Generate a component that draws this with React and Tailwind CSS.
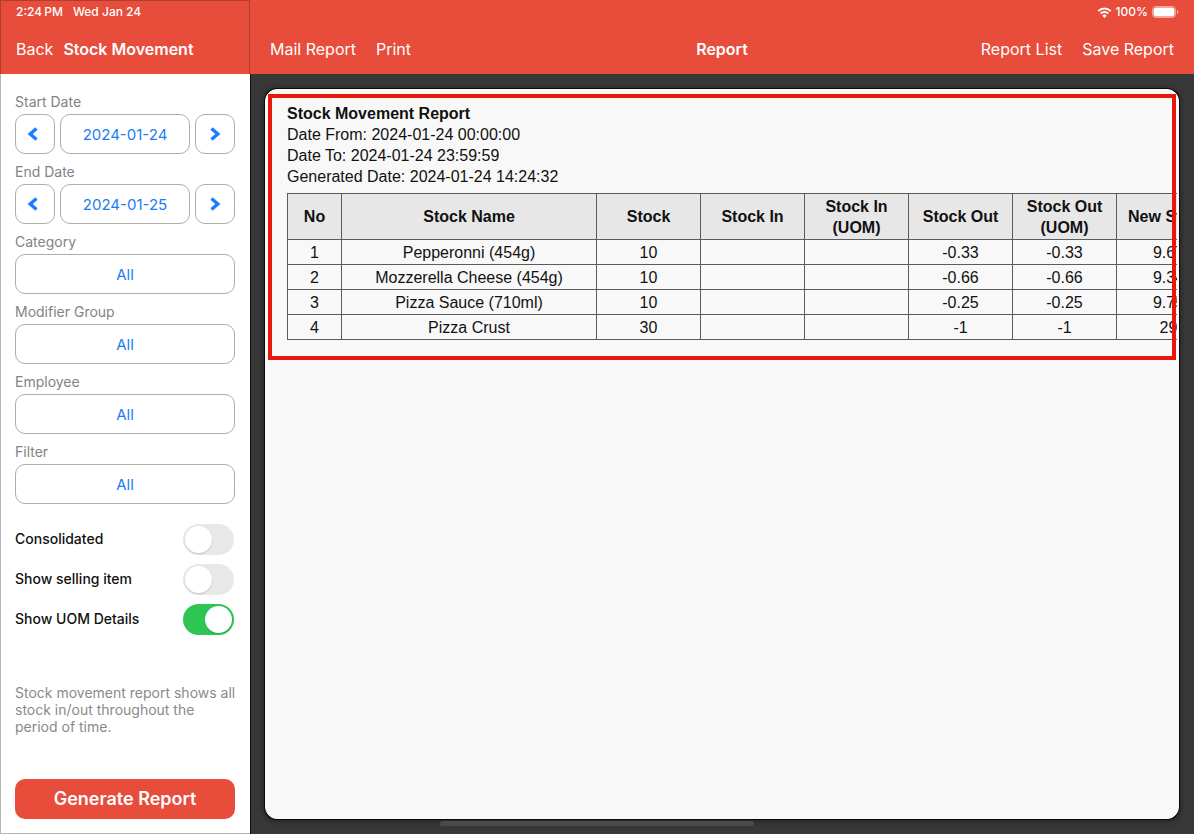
import React, { useState } from "react";

const columns = [
  { label: "No", width: "w-[54px]" },
  { label: "Stock Name", width: "w-[255px]" },
  { label: "Stock", width: "w-[104px]" },
  { label: "Stock In", width: "w-[104px]" },
  { label: "Stock In (UOM)", width: "w-[104px]" },
  { label: "Stock Out", width: "w-[104px]" },
  { label: "Stock Out (UOM)", width: "w-[104px]" },
  { label: "New Stock", width: "w-[104px]" },
];

const rows = [
  ["1", "Pepperonni (454g)", "10", "", "", "-0.33", "-0.33", "9.67"],
  ["2", "Mozzerella Cheese (454g)", "10", "", "", "-0.66", "-0.66", "9.34"],
  ["3", "Pizza Sauce (710ml)", "10", "", "", "-0.25", "-0.25", "9.75"],
  ["4", "Pizza Crust", "30", "", "", "-1", "-1", "29"],
];

const pickers = [
  { id: "category", label: "Category" },
  { id: "modifier-group", label: "Modifier Group" },
  { id: "employee", label: "Employee" },
  { id: "filter", label: "Filter" },
];

const boxClass =
  "h-10 rounded-[10px] border border-[#adadad] bg-white text-[15px] text-[#1a7df5] flex items-center justify-center";

function shiftDate(value, days) {
  const date = new Date(`${value}T00:00:00Z`);
  date.setUTCDate(date.getUTCDate() + days);
  return date.toISOString().slice(0, 10);
}

function Chevron({ direction }) {
  return (
    <svg width="12" height="14" viewBox="0 0 12 14" fill="none" aria-hidden="true">
      <path
        d={direction === "left" ? "M9.5 1.500 3.200 7l6.300 5.500" : "M2.500 1.500 8.800 7l-6.300 5.500"}
        stroke="#1a7dff"
        strokeWidth="3.4"
      />
    </svg>
  );
}

function WifiIcon() {
  return (
    <svg width="15" height="11" viewBox="0 0 14 11" fill="none" aria-hidden="true">
      <path d="M.8 4.100a8.800 8.800 0 0 1 12.400 0" stroke="white" strokeWidth="2" />
      <path d="M3.200 6.500a5.400 5.400 0 0 1 7.600 0" stroke="white" strokeWidth="1.9" />
      <path d="M7 11 4.800 8.700a3.100 3.100 0 0 1 4.400 0z" fill="white" />
    </svg>
  );
}

function BatteryIcon() {
  return (
    <svg width="27" height="12" viewBox="0 0 27 12" fill="none" aria-hidden="true">
      <rect x="0.5" y="0.5" width="23" height="11" rx="3.4" stroke="white" strokeOpacity="0.5" />
      <rect x="1.5" y="1.5" width="21" height="9" rx="2.6" fill="white" />
      <path d="M25 4v4c.9-.3 1.400-1.100 1.400-2S25.900 4.300 25 4z" fill="white" fillOpacity="0.55" />
    </svg>
  );
}

function DateField({ id, label, value, onChange }) {
  return (
    <div className="flex flex-col gap-0.5">
      <span id={id} className="text-sm leading-5 text-[#838383]">
        {label}
      </span>
      <div className="flex gap-[5px]">
        <button
          type="button"
          aria-label={`Previous ${label}`}
          className={`w-10 pr-1 ${boxClass}`}
          onClick={() => onChange(shiftDate(value, -1))}
        >
          <Chevron direction="left" />
        </button>
        <button type="button" aria-describedby={id} className={`flex-1 pt-0.5 ${boxClass}`}>
          {value}
        </button>
        <button
          type="button"
          aria-label={`Next ${label}`}
          className={`w-10 ${boxClass}`}
          onClick={() => onChange(shiftDate(value, 1))}
        >
          <Chevron direction="right" />
        </button>
      </div>
    </div>
  );
}

function PickerField({ id, label }) {
  return (
    <div className="flex flex-col gap-0.5">
      <span id={id} className="text-sm leading-5 text-[#838383]">
        {label}
      </span>
      <button type="button" aria-describedby={id} className={`w-full pt-0.5 ${boxClass}`}>
        All
      </button>
    </div>
  );
}

function Toggle({ id, label, checked, onChange }) {
  return (
    <div className="flex items-center justify-between pr-px">
      <label htmlFor={id} className="pb-0.5 text-sm font-medium text-[#111]">
        {label}
      </label>
      <input
        id={id}
        type="checkbox"
        role="switch"
        checked={checked}
        onChange={onChange}
        className="flex h-[31px] w-[51px] cursor-pointer appearance-none rounded-full bg-[#e8e8e8] p-0.5 before:size-[27px] before:rounded-full before:bg-white before:shadow-[0_1px_2px_rgba(0,0,0,0.15)] before:content-[''] checked:justify-end checked:bg-[#2dc653]"
      />
    </div>
  );
}

function Sidebar() {
  const [startDate, setStartDate] = useState("2024-01-24");
  const [endDate, setEndDate] = useState("2024-01-25");
  const [options, setOptions] = useState({
    consolidated: false,
    selling: false,
    uom: true,
  });

  const onToggle = (e) => {
    setOptions((prevState) => ({
      ...prevState,
      [e.target.id]: e.target.checked,
    }));
  };

  return (
    <aside className="flex w-[250px] shrink-0 flex-col">
      <header className="flex h-[74px] flex-col border-x border-t border-[#b23c2e] bg-[#e84c3b] px-[15px] text-white">
        <div className="flex h-[22px] items-center gap-2.5 text-xs font-medium">
          <span>2:24{"\u2009"}PM</span>
          <span>Wed Jan 24</span>
        </div>
        <div className="flex h-[51px] items-center gap-2.5 text-base">
          <button type="button">Back</button>
          <h1 className="font-semibold">Stock Movement</h1>
        </div>
      </header>
      <div className="flex flex-1 flex-col border-b border-l border-[#b5b5b5] bg-white pt-[18px] pr-[15px] pb-3.5 pl-3.5">
        <div className="flex flex-col gap-2">
          <DateField id="start-date" label="Start Date" value={startDate} onChange={setStartDate} />
          <DateField id="end-date" label="End Date" value={endDate} onChange={setEndDate} />
          {pickers.map((picker) => (
            <PickerField key={picker.id} id={picker.id} label={picker.label} />
          ))}
        </div>
        <div className="mt-5 flex flex-col gap-[9px]">
          <Toggle
            id="consolidated"
            label="Consolidated"
            checked={options.consolidated}
            onChange={onToggle}
          />
          <Toggle
            id="selling"
            label="Show selling item"
            checked={options.selling}
            onChange={onToggle}
          />
          <Toggle id="uom" label="Show UOM Details" checked={options.uom} onChange={onToggle} />
        </div>
        <p className="mt-[49px] text-sm leading-[17px] whitespace-nowrap text-[#8a8a8a]">
          Stock movement report shows all
          <br />
          stock in/out throughout the
          <br />
          period of time.
        </p>
        <button
          type="submit"
          className="mt-auto h-10 w-full rounded-[10px] bg-[#e84c3b] text-lg font-semibold text-white"
        >
          Generate Report
        </button>
      </div>
    </aside>
  );
}

function ReportTable() {
  return (
    <table className="w-[934px] table-fixed border-collapse text-center leading-[21px]">
      <thead>
        <tr className="h-[46px] bg-[#e7e7e7]">
          {columns.map((column) => (
            <th
              key={column.label}
              scope="col"
              className={`border border-[#5c5c5c] px-2 py-px font-bold ${column.width}`}
            >
              {column.label}
            </th>
          ))}
        </tr>
      </thead>
      <tbody>
        {rows.map((row) => (
          <tr key={row[0]} className="h-[25px]">
            {row.map((cell, i) => (
              <td key={i} className="border border-[#5c5c5c]">
                {cell}
              </td>
            ))}
          </tr>
        ))}
      </tbody>
    </table>
  );
}

function App() {
  return (
    <div className="relative flex min-h-screen overflow-hidden bg-[#383838] font-['Inter','Liberation_Sans',sans-serif]">
      <Sidebar />
      <main className="flex min-w-0 flex-1 flex-col border-l border-[#111]">
        <header className="-ml-px h-[74px] bg-[#e84c3b] text-white">
          <div className="flex h-6 items-center justify-end gap-1 pr-[15px] text-xs font-medium">
            <WifiIcon />
            <span>100%</span>
            <BatteryIcon />
          </div>
          <nav className="grid h-[50px] grid-cols-[1fr_auto_1fr] items-center px-5 text-base">
            <div className="flex gap-5">
              <button type="button">Mail Report</button>
              <button type="button">Print</button>
            </div>
            <h2 className="font-semibold">Report</h2>
            <div className="flex justify-end gap-5">
              <button type="button">Report List</button>
              <button type="button">Save Report</button>
            </div>
          </nav>
        </header>
        <div className="flex flex-1 py-[15px] pr-[15px] pl-3.5">
          <section className="min-w-0 flex-1 rounded-xl border border-[#f8f8f8] bg-[#f8f8f8] pt-1 pr-px pl-0.5 font-['Liberation_Sans',Arial,sans-serif] text-base text-[#111] shadow-[0_0_0_1px_#0a0a0a,0_1px_6px_1px_rgba(0,0,0,0.45)]">
            <div className="relative h-[266px]">
              <div className="h-full overflow-hidden pt-[9px] pl-[19px]">
                <div className="pb-1.5 leading-[21px]">
                  <h3 className="font-bold">Stock Movement Report</h3>
                  <p>Date From: 2024-01-24 00:00:00</p>
                  <p>Date To: 2024-01-24 23:59:59</p>
                  <p>Generated Date: 2024-01-24 14:24:32</p>
                </div>
                <ReportTable />
              </div>
              <div className="pointer-events-none absolute inset-y-0 right-px left-0 border-4 border-[#e8170c]" />
            </div>
          </section>
        </div>
      </main>
      <div className="absolute bottom-2 left-1/2 h-[5px] w-[314px] -translate-x-1/2 rounded-full bg-[#4a4a4a]" />
    </div>
  );
}

export default App;
